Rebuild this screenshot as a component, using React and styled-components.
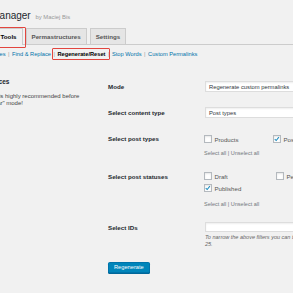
import React from "react";
import styled, { createGlobalStyle } from "styled-components";

const GlobalStyle = createGlobalStyle`
  html, body {
    margin: 0;
    padding: 0;
    background: #f1f1f1;
  }
  body {
    font-family: "Liberation Sans", Arial, sans-serif;
    color: #444;
  }
`;

const Page = styled.div`
  width: 293px;
  height: 293px;
  overflow: hidden;
  position: relative;
`;

const Title = styled.h1`
  margin: 0 0 0 -56px;
  padding-top: 10px;
  font-size: 10px;
  line-height: 12px;
  font-weight: 400;
  color: #23282d;
  white-space: nowrap;

  small {
    font-size: 5.9px;
    color: #999;
    margin-left: 2px;
  }
`;

const TabBar = styled.div`
  display: flex;
  align-items: flex-end;
  margin: 5px 0 0 -72px;
  border-bottom: 1px solid #ccc;
  width: 400px;
`;

const Tab = styled.div`
  position: relative;
  flex-shrink: 0;
  margin-left: 3px;
  padding: 0 5px;
  height: 15px;
  line-height: 15px;
  border: 1px solid #ccc;
  border-bottom: none;
  background: ${(p) => (p.$active ? "#f1f1f1" : "#e5e5e5")};
  color: ${(p) => (p.$active ? "#000" : "#555")};
  font-size: 6.2px;
  font-weight: 700;
  white-space: nowrap;
  ${(p) => p.$active && "height: 16px; margin-bottom: -1px;"}

  ${(p) =>
    p.$marked &&
    `&::after {
      content: "";
      position: absolute;
      left: -4px;
      right: -4px;
      top: -2px;
      bottom: -3px;
      border: 1.5px solid #e2463f;
      border-radius: 1px;
    }`}
`;

const SubNav = styled.ul`
  display: flex;
  list-style: none;
  margin: 5px 0 0 -21px;
  padding: 0;
  font-size: 5.7px;
  line-height: 8px;
  white-space: nowrap;
  color: #666;
`;

const SubLink = styled.a`
  position: relative;
  color: ${(p) => (p.$current ? "#000" : "#0073aa")};
  font-weight: ${(p) => (p.$current ? 700 : 400)};
  text-decoration: none;

  ${(p) =>
    p.$marked &&
    `&::after {
      content: "";
      position: absolute;
      left: -5px;
      right: -5px;
      top: -3px;
      bottom: -3px;
      border: 1.5px solid #e2463f;
      border-radius: 1px;
    }`}
`;

const Sep = styled.span`
  margin: 0 2.5px;
  color: #999;
`;

const Columns = styled.div`
  display: flex;
  margin: 15.5px 0 0 -14px;
`;

const Sidebar = styled.div`
  flex: 0 0 122px;
  padding-top: 4px;

  h3 {
    margin: 0 0 7px;
    font-size: 6.5px;
    line-height: 8px;
    font-weight: 700;
    color: #23282d;
  }

  p {
    margin: 0;
    font-size: 6px;
    line-height: 7.5px;
    white-space: nowrap;
    color: #444;
  }
`;

const Form = styled.div`
  flex: 0 0 320px;
`;

const Row = styled.div`
  display: grid;
  grid-template-columns: 96px 1fr;
  padding: 7.5px 0;
  padding-top: ${(p) => p.$pt ?? 7.5}px;
`;

const Label = styled.div`
  font-size: 6.2px;
  font-weight: 700;
  line-height: ${(p) => p.$lh ?? 11}px;
  color: #23282d;
  padding-top: ${(p) => p.$pt ?? 0}px;
`;

const Select = styled.div`
  width: 180px;
  height: 11px;
  line-height: 11px;
  box-sizing: border-box;
  margin-left: 1px;
  padding-left: 3px;
  background: #fff;
  border: 1px solid #ddd;
  box-shadow: inset 0 1px 2px rgba(0, 0, 0, 0.07);
  font-size: 5.8px;
  color: #32373c;
  white-space: nowrap;
`;

const Options = styled.div`
  display: flex;
  flex-wrap: wrap;
  width: 160px;
`;

const Option = styled.label`
  display: flex;
  align-items: center;
  width: ${(p) => p.$w}px;
  height: ${(p) => p.$h ?? 12}px;
  font-size: 6.1px;
  color: #555;
  white-space: nowrap;
`;

const Box = styled.span`
  display: inline-flex;
  align-items: center;
  justify-content: center;
  width: 7.5px;
  height: 7.5px;
  box-sizing: border-box;
  margin-right: 3px;
  background: #fff;
  border: 1px solid #b4b9be;
  box-shadow: inset 0 1px 2px rgba(0, 0, 0, 0.1);
`;

const SelectAll = styled.div`
  margin-top: ${(p) => p.$mt}px;
  font-size: 5.5px;
  line-height: 7px;
  color: #72777c;
`;

const TextInput = styled.div`
  width: 180px;
  height: 10px;
  box-sizing: border-box;
  margin: 1px 0 0 1px;
  background: #fff;
  border: 1px solid #ddd;
  box-shadow: inset 0 1px 2px rgba(0, 0, 0, 0.07);
`;

const Description = styled.p`
  margin: 2px 0 0 1px;
  font-size: 5.5px;
  line-height: 7px;
  font-style: italic;
  color: #666;
  white-space: nowrap;
`;

const Button = styled.button`
  display: block;
  margin-top: 6.5px;
  height: 11px;
  padding: 0 5px;
  font-family: inherit;
  font-size: 5.7px;
  line-height: 9px;
  color: #fff;
  background: #0085ba;
  border: 1px solid #0073aa;
  border-radius: 1.5px;
  box-shadow: 0 1px 0 #006799;
  cursor: pointer;
`;

const Check = ({ checked }) => (
  <Box>
    {checked && (
      <svg width="6" height="6" viewBox="0 0 6 6">
        <path d="M0.8 3.1 L2.4 4.7 L5.3 1" fill="none" stroke="#1e8cbe" strokeWidth="1.1" />
      </svg>
    )}
  </Box>
);

const tabs = ["Permalink editor", "Tools", "Permastructures", "Settings"];
const links = ["Duplicates", "Find & Replace", "Regenerate/Reset", "Stop Words", "Custom Permalinks"];

export default function App() {
  return (
    <Page>
      <GlobalStyle />
      <Title>
        Permalink Manager <small>by Maciej Bis</small>
      </Title>

      <TabBar>
        {tabs.map((t) => (
          <Tab key={t} $active={t === "Tools"} $marked={t === "Tools"}>
            {t}
          </Tab>
        ))}
      </TabBar>

      <SubNav>
        {links.map((l, i) => (
          <li key={l}>
            <SubLink href="#" $current={l === "Regenerate/Reset"} $marked={l === "Regenerate/Reset"}>
              {l}
            </SubLink>
            {i < links.length - 1 && <Sep>|</Sep>}
          </li>
        ))}
      </SubNav>

      <Columns>
        <Sidebar>
          <h3>Notices</h3>
          <p>This is highly recommended before</p>
          <p>"Clear" mode!</p>
        </Sidebar>

        <Form>
          <Row>
            <Label>Mode</Label>
            <Select>Regenerate custom permalinks</Select>
          </Row>
          <Row>
            <Label>Select content type</Label>
            <Select>Post types</Select>
          </Row>
          <Row>
            <Label $lh={12}>Select post types</Label>
            <div>
              <Options>
                <Option $w={69}>
                  <Check />
                  Products
                </Option>
                <Option $w={69}>
                  <Check checked />
                  Posts
                </Option>
              </Options>
              <SelectAll $mt={4.5}>Select all | Unselect all</SelectAll>
            </div>
          </Row>
          <Row $pt={6}>
            <Label $lh={12} $pt={1}>Select post statuses</Label>
            <div>
              <Options>
                <Option $w={72}>
                  <Check />
                  Draft
                </Option>
                <Option $w={72}>
                  <Check />
                  Pending
                </Option>
                <Option $w={72}>
                  <Check checked />
                  Published
                </Option>
              </Options>
              <SelectAll $mt={7}>Select all | Unselect all</SelectAll>
            </div>
          </Row>
          <Row $pt={5}>
            <Label $lh={12} $pt={1}>Select IDs</Label>
            <div>
              <TextInput />
              <Description>
                To narrow the above filters you can type the post IDs (or ranges) here. Eg. 1-8, 10,
                <br />
                25.
              </Description>
            </div>
          </Row>
          <Button>Regenerate</Button>
        </Form>
      </Columns>
    </Page>
  );
}
